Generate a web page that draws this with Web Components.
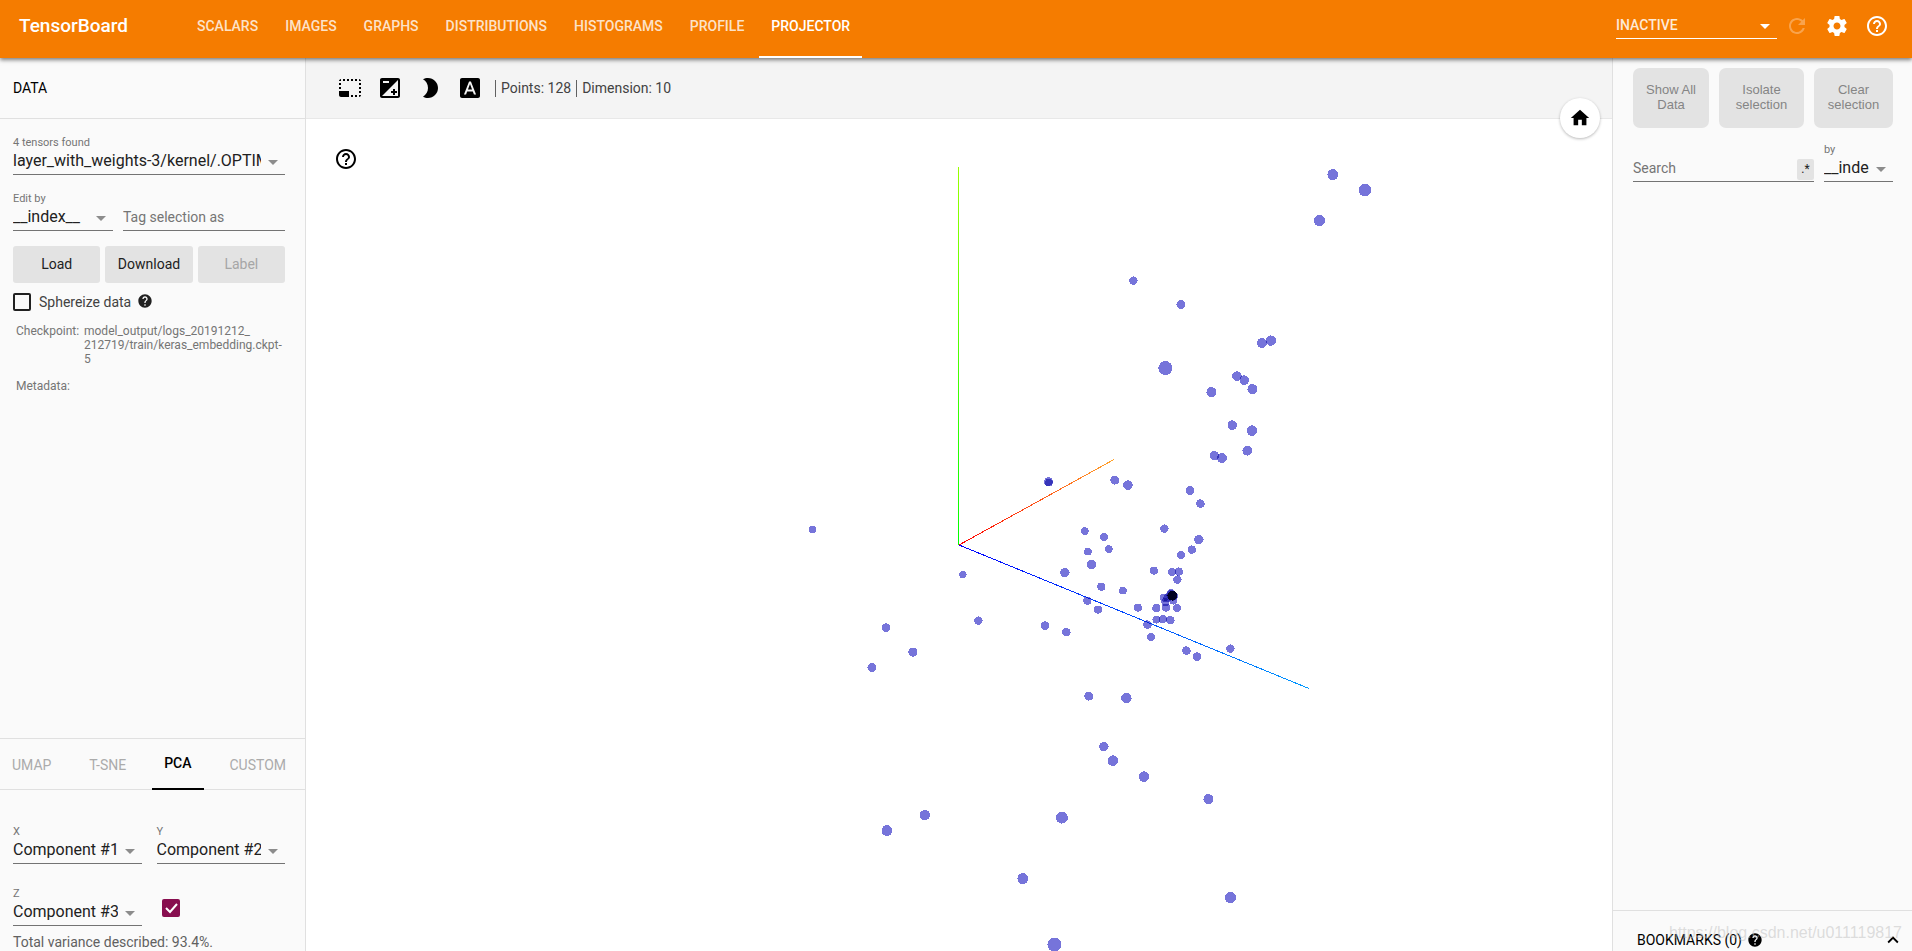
<!DOCTYPE html>
<html lang="en">
<head>
<meta charset="utf-8">
<title>TensorBoard</title>
<style>
html, body { margin: 0; height: 100%; }
body { font-family: Roboto, "Noto Sans", sans-serif; font-size: 14px; color: #212121; background: #fff; overflow: hidden; }
</style>
</head>
<body>
<tb-app></tb-app>
<script>
const ICONS = {
  refresh: 'M17.65 6.35C16.2 4.9 14.21 4 12 4c-4.42 0-7.99 3.58-7.99 8s3.57 8 7.99 8c3.73 0 6.84-2.55 7.73-6h-2.08c-.82 2.33-3.04 4-5.65 4-3.31 0-6-2.69-6-6s2.69-6 6-6c1.66 0 3.14.69 4.22 1.78L13 11h7V4l-2.35 2.35z',
  settings: 'M19.43 12.98c.04-.32.07-.64.07-.98s-.03-.66-.07-.98l2.11-1.65c.19-.15.24-.42.12-.64l-2-3.46c-.12-.22-.39-.3-.61-.22l-2.49 1c-.52-.4-1.08-.73-1.69-.98l-.38-2.65C14.46 2.18 14.25 2 14 2h-4c-.25 0-.46.18-.49.42l-.38 2.65c-.61.25-1.17.59-1.69.98l-2.49-1c-.23-.09-.49 0-.61.22l-2 3.46c-.13.22-.07.49.12.64l2.11 1.65c-.04.32-.07.65-.07.98s.03.66.07.98l-2.11 1.65c-.19.15-.24.42-.12.64l2 3.46c.12.22.39.3.61.22l2.49-1c.52.4 1.08.73 1.69.98l.38 2.65c.03.24.24.42.49.42h4c.25 0 .46-.18.49-.42l.38-2.65c.61-.25 1.17-.59 1.69-.98l2.49 1c.23.09.49 0 .61-.22l2-3.46c.12-.22.07-.49-.12-.64l-2.11-1.65zM12 15.5c-1.93 0-3.5-1.57-3.5-3.5s1.57-3.5 3.5-3.5 3.5 1.57 3.5 3.5-1.57 3.5-3.5 3.5z',
  'help-outline': 'M11 18h2v-2h-2v2zm1-16C6.48 2 2 6.48 2 12s4.48 10 10 10 10-4.48 10-10S17.52 2 12 2zm0 18c-4.41 0-8-3.59-8-8s3.59-8 8-8 8 3.59 8 8-3.59 8-8 8zm0-14c-2.21 0-4 1.79-4 4h2c0-1.1.9-2 2-2s2 .9 2 2c0 2-3 1.75-3 5h2c0-2.25 3-2.5 3-5 0-2.21-1.79-4-4-4z',
  help: 'M12 2C6.48 2 2 6.48 2 12s4.48 10 10 10 10-4.48 10-10S17.52 2 12 2zm1 17h-2v-2h2v2zm2.07-7.75l-.9.92C13.45 12.9 13 13.5 13 15h-2v-.5c0-1.1.45-2.1 1.17-2.83l1.24-1.26c.37-.36.59-.86.59-1.41 0-1.1-.9-2-2-2s-2 .9-2 2H8c0-2.21 1.79-4 4-4s4 1.79 4 4c0 .88-.36 1.68-.93 2.25z',
  select: 'M23 15h-2v2h2v-2zm0-4h-2v2h2v-2zm0 8h-2v2c1 0 2-1 2-2zM15 3h-2v2h2V3zm8 4h-2v2h2V7zm-2-4v2h2c0-1-1-2-2-2zM3 21h8v-6H1v4c0 1.1.9 2 2 2zM3 7H1v2h2V7zm12 12h-2v2h2v-2zm4-16h-2v2h2V3zm0 16h-2v2h2v-2zM3 3C2 3 1 4 1 5h2V3zm0 8H1v2h2v-2zm8-8H9v2h2V3zM7 3H5v2h2V3z',
  exposure: 'M15 17v2h2v-2h2v-2h-2v-2h-2v2h-2v2h2zm5-15H4c-1.1 0-2 .9-2 2v16c0 1.1.9 2 2 2h16c1.1 0 2-.9 2-2V4c0-1.1-.9-2-2-2zM5 5h6v2H5V5zm15 15H4L20 4v16z',
  night: 'M10 2c-1.82 0-3.53.5-5 1.35C7.99 5.08 10 8.3 10 12s-2.01 6.92-5 8.65C6.47 21.5 8.18 22 10 22c5.52 0 10-4.48 10-10S15.52 2 10 2z',
  labels: 'M9.93 13.5h4.14L12 7.98zM20 2H4c-1.1 0-2 .9-2 2v16c0 1.1.9 2 2 2h16c1.1 0 2-.9 2-2V4c0-1.1-.9-2-2-2zm-4.05 16.5l-1.14-3H9.17l-1.12 3H5.96l5.11-13h1.86l5.11 13h-2.09z',
  home: 'M10 20v-6h4v6h5v-8h3L12 3 2 12h3v8z',
  'expand-less': 'M12 8l-6 6 1.41 1.41L12 10.83l4.59 4.58L18 14z',
  caret: 'M7 10l5 5 5-5z'
};

function define(name, html, setup) {
  const t = document.createElement('template');
  t.innerHTML = html;
  customElements.define(name, class extends HTMLElement {
    connectedCallback() {
      if (this.shadowRoot) return;
      this.attachShadow({ mode: 'open' }).append(t.content.cloneNode(true));
      if (setup) setup(this, this.shadowRoot);
    }
  });
}

define('tb-icon', `
<style>
:host { display: inline-flex; width: 24px; height: 24px; flex: none; }
svg { width: 100%; height: 100%; fill: currentColor; display: block; }
</style>
<svg viewBox="0 0 24 24" aria-hidden="true"><path/></svg>`,
(el, root) => root.querySelector('path').setAttribute('d', ICONS[el.getAttribute('name')]));

define('icon-button', `
<style>
:host { display: inline-flex; }
button { display: flex; align-items: center; justify-content: center; border: 0; padding: 0; margin: 0; width: 40px; height: 40px; background: none; color: inherit; }
</style>
<button type="button"><slot></slot></button>`,
(el, root) => root.querySelector('button').setAttribute('aria-label', el.getAttribute('label')));

define('tb-select', `
<style>
:host { display: block; min-width: 0; }
label { display: block; font-size: 11px; line-height: 14px; color: #757575; }
.box { position: relative; border-bottom: 1px solid var(--line, #737373); }
select { display: block; box-sizing: border-box; width: 100%; height: 24px; margin: 0; padding: 0 24px 2px 0; border: 0; border-radius: 0; outline: 0; appearance: none; background: none; font-family: inherit; font-size: var(--size, 16px); font-weight: inherit; line-height: 22px; color: inherit; text-overflow: clip; }
tb-icon { position: absolute; right: 0; top: 0; color: var(--caret, #8c8c8c); pointer-events: none; }
</style>
<label for="s"></label>
<div class="box"><select id="s"><option></option></select><tb-icon name="caret"></tb-icon></div>`,
(el, root) => {
  const label = root.querySelector('label');
  label.textContent = el.getAttribute('label') || '';
  if (!label.textContent) {
    label.remove();
    root.querySelector('select').setAttribute('aria-label', el.getAttribute('name'));
  }
  root.querySelector('option').textContent = el.getAttribute('value');
});

define('tb-text', `
<style>
:host { display: block; min-width: 0; }
.box { display: flex; align-items: center; border-bottom: 1px solid #737373; height: 24px; }
input { flex: 1; box-sizing: border-box; min-width: 0; width: 100%; height: 24px; margin: 0; padding: 0 0 2px; border: 0; outline: 0; background: none; font: 14px/22px Roboto, "Noto Sans", sans-serif; color: #212121; }
input::placeholder { color: #757575; opacity: 1; }
</style>
<div class="box"><input type="text"><slot></slot></div>`,
(el, root) => {
  const i = root.querySelector('input');
  i.placeholder = el.getAttribute('placeholder');
  i.setAttribute('aria-label', i.placeholder);
});

define('tb-checkbox', `
<style>
:host { display: block; }
label { display: flex; align-items: center; gap: 8px; line-height: 18px; color: #424242; }
input { appearance: none; flex: none; box-sizing: border-box; width: 18px; height: 18px; margin: 0; border: 2px solid #212121; border-radius: 2px; }
.wrap { position: relative; display: flex; }
svg { display: none; position: absolute; left: 0; top: 0; width: 18px; height: 18px; fill: none; stroke: #fff; stroke-width: 2; pointer-events: none; }
input:checked { background: #880e4f; border-color: #880e4f; }
input:checked + svg { display: block; }
</style>
<label><span class="wrap"><input type="checkbox"><svg viewBox="0 0 18 18"><path d="M4 9l4 4 7-8"/></svg></span><slot></slot></label>`,
(el, root) => {
  const i = root.querySelector('input');
  i.checked = el.hasAttribute('checked');
  if (el.getAttribute('label')) i.setAttribute('aria-label', el.getAttribute('label'));
});

define('tb-header', `
<style>
:host { display: flex; height: 58px; box-sizing: border-box; padding: 0 15px 0 19px; background: #f57c00; color: #fff; box-shadow: 0 2px 4px rgba(0,0,0,.5); position: relative; z-index: 2; }
h1 { margin: 0; width: 166px; font-size: 19px; font-weight: 500; line-height: 52px; }
nav { flex: 1; display: flex; gap: 3px; }
a { display: block; box-sizing: border-box; height: 58px; padding: 0 12px; line-height: 53px; font-size: 14px; font-weight: 500; color: rgba(255,255,255,.8); text-decoration: none; }
a[aria-current] { color: #fff; border-bottom: 2px solid #fff; }
.tools { display: flex; align-items: flex-start; padding-top: 6px; }
tb-select { width: 161px; margin-top: 8px; --size: 14px; --line: #fff; --caret: #fff; font-weight: 500; color: rgba(255,255,255,.85); }
.off { opacity: .3; }
</style>
<h1>TensorBoard</h1>
<nav>
<a href="#scalars">SCALARS</a><a href="#images">IMAGES</a><a href="#graphs">GRAPHS</a><a href="#distributions">DISTRIBUTIONS</a><a href="#histograms">HISTOGRAMS</a><a href="#profile">PROFILE</a><a href="#projector" aria-current="page">PROJECTOR</a>
</nav>
<div class="tools">
<tb-select name="Inactive plugins" value="INACTIVE"></tb-select>
<icon-button class="off" label="Reload"><tb-icon name="refresh"></tb-icon></icon-button>
<icon-button label="Settings"><tb-icon name="settings"></tb-icon></icon-button>
<icon-button label="Help"><tb-icon name="help-outline"></tb-icon></icon-button>
</div>`);

define('data-panel', `
<style>
:host { display: flex; flex-direction: column; }
h2 { margin: 0; padding: 0 13px; height: 60px; line-height: 60px; font-size: 14px; font-weight: 400; color: #000; border-bottom: 1px solid #e0e0e0; }
.body { padding: 17px 20px 0 13px; }
.row { display: flex; gap: 10px; align-items: flex-end; margin-top: 17px; }
.row tb-select { width: 100px; flex: none; }
.row tb-text { flex: 1; }
.buttons { display: grid; grid-template-columns: repeat(3, 1fr); gap: 5px; margin: 15px 0 10px; }
button { height: 37px; padding: 0 0 2px; border: 0; border-radius: 3px; background: #e3e3e3; color: #212121; font: 14px Roboto, "Noto Sans", sans-serif; }
button:disabled { color: #a6a6a6; }
.sphere { display: flex; align-items: center; gap: 6px; }
.sphere tb-icon { width: 16px; height: 16px; padding-bottom: 2px; }
dl { display: grid; grid-template-columns: 63px 1fr; column-gap: 5px; margin: 13px 0 0; padding-left: 3px; font-size: 12px; line-height: 14px; color: #757575; }
dt, dd { margin: 0 0 13px; }
</style>
<h2>DATA</h2>
<div class="body">
<tb-select label="4 tensors found" value="layer_with_weights-3/kernel/.OPTIMIZ"></tb-select>
<div class="row"><tb-select label="Edit by" value="__index__"></tb-select><tb-text placeholder="Tag selection as"></tb-text></div>
<div class="buttons"><button type="button">Load</button><button type="button">Download</button><button type="button" disabled>Label</button></div>
<div class="sphere"><tb-checkbox>Sphereize data</tb-checkbox><tb-icon name="help"></tb-icon></div>
<dl><dt>Checkpoint:</dt><dd>model_output/logs_20191212_<br>212719/train/keras_embedding.ckpt-<br>5</dd><dt>Metadata:</dt><dd></dd></dl>
</div>`);

define('projections-panel', `
<style>
:host { display: block; height: 213px; flex: none; box-sizing: border-box; border-top: 1px solid #e0e0e0; overflow: hidden; }
.tabs { display: flex; justify-content: space-between; height: 50px; border-bottom: 1px solid #e0e0e0; padding-right: 7px; }
.tabs a { box-sizing: border-box; height: 51px; padding: 0 12px; line-height: 53px; text-decoration: none; color: #ababab; }
.tabs a[aria-current] { color: #000; font-weight: 500; line-height: 49px; border-bottom: 2px solid #000; }
.grid { display: grid; grid-template-columns: 1fr 1fr; gap: 23px 15px; padding: 35px 20px 0 13px; }
tb-checkbox { align-self: end; padding: 0 0 9px 5px; }
p { margin: 6px 13px 0; line-height: 20px; color: #616161; }
</style>
<div class="tabs"><a href="#umap">UMAP</a><a href="#tsne">T-SNE</a><a href="#pca" aria-current="true">PCA</a><a href="#custom">CUSTOM</a></div>
<div class="grid">
<tb-select label="X" value="Component #1"></tb-select>
<tb-select label="Y" value="Component #2"></tb-select>
<tb-select label="Z" value="Component #3"></tb-select>
<tb-checkbox checked label="Use Z component"></tb-checkbox>
</div>
<p>Total variance described: 93.4%.</p>`);

define('scatter-plot', `
<style>
:host { display: block; min-height: 0; overflow: hidden; background: #fff; isolation: isolate; }
svg { display: block; width: 100%; height: 100%; }
circle { fill: #7674da; mix-blend-mode: multiply; }
</style>
<svg viewBox="306 119 1306 832" preserveAspectRatio="xMidYMid slice" shape-rendering="crispEdges" role="img" aria-label="PCA point cloud">
<defs>
<linearGradient id="gy" gradientUnits="userSpaceOnUse" x1="959" y1="545" x2="959" y2="168"><stop stop-color="#0f0"/><stop offset="1" stop-color="#9f0"/></linearGradient>
<linearGradient id="gx" gradientUnits="userSpaceOnUse" x1="959" y1="545" x2="1114" y2="459"><stop stop-color="#f00"/><stop offset="1" stop-color="#ffa52e"/></linearGradient>
<linearGradient id="gz" gradientUnits="userSpaceOnUse" x1="959" y1="545" x2="1309" y2="689"><stop stop-color="#00f"/><stop offset="1" stop-color="#0099ff"/></linearGradient>
</defs>
<rect x="958" y="167" width="1" height="378" fill="url(#gy)"/>
<path d="M959 545L1114 459.5" stroke="url(#gx)"/>
<path d="M959 545L1309 688.5" stroke="url(#gz)"/>
<g transform="translate(.4 .1)"></g>
</svg>`,
(el, root) => {
  // Projected positions of the embedding's points: x, y, radius.
  const points = `1332.5,174.5,5.5 1364.5,190,6.3 1319,220.5,5.6 1133,280.5,4.2 1180.5,304.5,4.5 1261.5,343,5 1270.5,340.5,5.2
1165,368,7 1236.5,376,4.8 1244,380,4.8 1252,389,5 1211,392,5 1232,425,4.8 1251.5,430.5,5.3 1247,450.5,5 1214,455.5,4.6 1221.5,458,5
1048,481.5,4.4 1048.5,482.5,3.8 1114.5,480,4.5 1127.5,485,4.8 1189.5,490.5,4.4 1200,503.5,4.3 1084.5,531,3.8 1103.5,537,4.2 1108.5,549,3.8
1087.5,551.5,3.8 1091,564.5,4.7 1064.5,572.5,4.7 1164,528.5,4.2 1198.5,539.5,4.7 1191.5,549.5,4.2 1180.5,555,4.2 1153.5,570.5,4 1171.5,572,4.2
1178.5,571.5,4.2 1177,579.5,4.2 1101,586.5,4.1 1122.5,590.5,3.8 1087,600.5,4.1 1097.5,609.5,4.1 1137.5,607.5,4 1156,608,4.1 1165.5,607.5,4.1
1176.5,608,4.2 1156,619.5,4 1162.5,619,4.1 1170,620,4.2 1147,624.5,4.3 1150.5,637,4.2 1186,650.5,4.3 1196.5,656.5,4.3 1230,648.5,4.2
1044.5,625.5,4.3 1066,632,4.2 1088.5,696,4.5 1126,698,5.2 812,529.5,3.7 962.5,574.5,3.7 978,620.5,4.2 885.5,627.5,4.3 912.5,652,4.6 871.5,667.5,4.5
1103.5,746.5,4.7 1112.5,760.5,5.3 1143.5,776.5,5.3 1208,799,5 1061.5,817.5,6 924.5,815,5.2 886.5,830.5,5.4 1022.5,878.5,5.5 1230,897.5,5.6 1054,944.5,7
1163.5,597.5,4 1165,602,4 1173,600.5,4 1167,598,4 1170.5,593.5,4.5 1171,595,5 1173,596,4.5 1172,595.5,5 1172,595.5,5 1172,595.5,5 1172,595.5,5 1172,595.5,5 1172,595.5,5 1172,595.5,5 1172,595.5,5 1172,595.5,5 1172,595.5,5`;
  const g = root.querySelector('g');
  for (const p of points.split(/\s+/)) {
    const [x, y, r] = p.split(',');
    const c = document.createElementNS('http://www.w3.org/2000/svg', 'circle');
    c.setAttribute('cx', x); c.setAttribute('cy', y); c.setAttribute('r', r);
    g.append(c);
  }
});

define('projector-view', `
<style>
:host { display: flex; flex-direction: column; position: relative; min-width: 0; }
.bar { display: flex; align-items: center; flex: none; height: 60px; padding-left: 24px; background: #f4f4f4; color: #000; border-bottom: 1px solid #e8e8e8; }
.stat { border-left: 1px solid #616161; padding: 0 5px; line-height: 17px; color: #424242; }
.stat:first-of-type { margin-left: 5px; }
scatter-plot { flex: 1; }
.help { position: absolute; left: 20px; top: 81px; color: #000; }
.home { position: absolute; right: 12px; top: 40px; border-radius: 50%; background: #fff; color: #000; box-shadow: 0 1px 3px rgba(0,0,0,.28); }
.home tb-icon { width: 22px; height: 22px; }
</style>
<div class="bar">
<icon-button label="Bounding box selection"><tb-icon name="select"></tb-icon></icon-button>
<icon-button label="Edit mode"><tb-icon name="exposure"></tb-icon></icon-button>
<icon-button label="Night mode"><tb-icon name="night"></tb-icon></icon-button>
<icon-button label="3D labels mode"><tb-icon name="labels"></tb-icon></icon-button>
<div class="stat">Points: 128</div><div class="stat">Dimension: 10</div>
</div>
<scatter-plot></scatter-plot>
<icon-button class="help" label="Help"><tb-icon name="help-outline"></tb-icon></icon-button>
<icon-button class="home" label="Reset view"><tb-icon name="home"></tb-icon></icon-button>`);

define('inspector-panel', `
<style>
:host { display: block; padding: 10px 19px 0 20px; }
.buttons { display: grid; grid-template-columns: 76fr 85fr 79fr; gap: 10px; }
.buttons button { height: 60px; padding: 0 8px 2px; border: 0; border-radius: 7px; background: #e3e3e3; color: #858585; font: 13px/15px "Liberation Sans", sans-serif; }
.search { display: flex; gap: 10px; align-items: flex-end; margin-top: 15px; }
tb-text { flex: 1; }
tb-select { width: 69px; }
.regex { width: 17px; height: 21px; padding: 0; border: 0; border-radius: 2px; background: #e3e3e3; color: #212121; font: 12px Roboto, "Noto Sans", sans-serif; }
</style>
<div class="buttons"><button type="button" disabled>Show All Data</button><button type="button" disabled>Isolate selection</button><button type="button" disabled>Clear selection</button></div>
<div class="search"><tb-text placeholder="Search"><button class="regex" type="button">.*</button></tb-text><tb-select label="by" value="__index__"></tb-select></div>`);

define('bookmarks-panel', `
<style>
:host { display: flex; align-items: center; position: relative; box-sizing: border-box; height: 41px; flex: none; padding: 18px 9px 0 24px; border-top: 1px solid #e0e0e0; line-height: 22px; color: #000; overflow: hidden; }
.mark { position: absolute; right: 10px; top: 11px; font: 16px/22px "Liberation Sans", sans-serif; color: rgba(190,190,190,.5); white-space: nowrap; }
.q { width: 16px; height: 16px; margin-left: 5px; }
icon-button { margin: 0 -10px 0 auto; }
.up { width: 22px; height: 22px; }
</style>
BOOKMARKS (0)<tb-icon class="q" name="help"></tb-icon><icon-button label="Expand bookmarks"><tb-icon class="up" name="expand-less"></tb-icon></icon-button>
<span class="mark">https://blog.csdn.net/u011119817</span>`);

define('tb-app', `
<style>
:host { display: flex; flex-direction: column; height: 100vh; }
main { flex: 1; min-height: 0; display: grid; grid-template-columns: 306px minmax(0, 1fr) 300px; }
aside { display: flex; flex-direction: column; min-height: 0; background: #fafafa; }
.left { border-right: 1px solid #e0e0e0; }
.right { border-left: 1px solid #e0e0e0; }
data-panel, inspector-panel { flex: 1; min-height: 0; overflow: hidden; }
</style>
<tb-header></tb-header>
<main>
<aside class="left"><data-panel></data-panel><projections-panel></projections-panel></aside>
<projector-view></projector-view>
<aside class="right"><inspector-panel></inspector-panel><bookmarks-panel></bookmarks-panel></aside>
</main>`);
</script>
</body>
</html>
